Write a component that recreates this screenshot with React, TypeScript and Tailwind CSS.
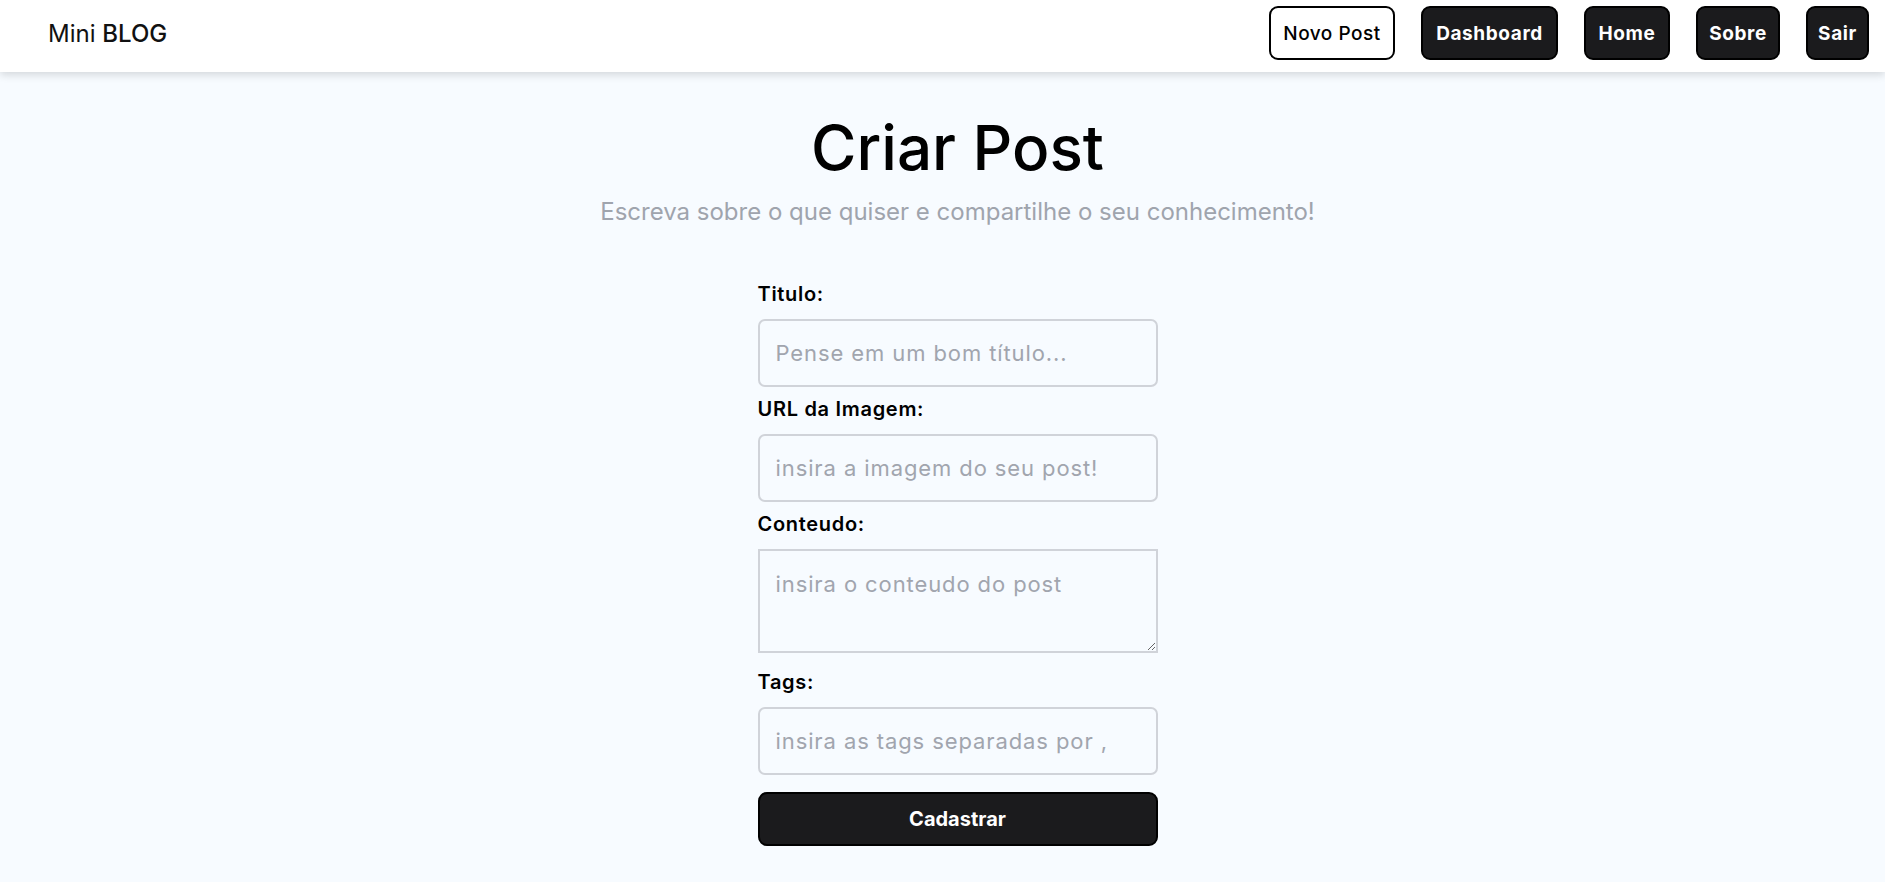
import React from "react";

const links = [
  { label: "Dashboard", w: "w-[137px]" },
  { label: "Home", w: "w-[86px]" },
  { label: "Sobre", w: "w-[84px]" },
  { label: "Sair", w: "w-[63px]" },
];

function Navbar() {
  return (
    <nav className="relative z-10 flex h-[72px] items-center justify-between bg-white pl-[48px] pr-[16px] pt-[6px] pb-[12px] shadow-[0_3px_8px_rgba(0,0,0,0.14)]">
      <a href="#" className="pt-[2px] text-[24px] leading-[54px] text-[#111]">
        Mini <span className="font-medium">BLOG</span>
      </a>
      <ul className="flex items-center gap-[26px]">
        <li>
          <a
            href="#"
            className="flex h-[54px] w-[126px] items-center justify-center rounded-[9px] border-2 border-black bg-white pt-[2px] text-[19px] font-medium tracking-[0.5px] text-black"
          >
            Novo Post
          </a>
        </li>
        {links.map((l) => (
          <li key={l.label}>
            <a
              href="#"
              className={`flex h-[54px] ${l.w} items-center justify-center rounded-[9px] border-2 border-black bg-[#1b1b1d] pt-[2px] text-[19px] font-bold tracking-[0.6px] text-white`}
            >
              {l.label}
            </a>
          </li>
        ))}
      </ul>
    </nav>
  );
}

function Field({
  label,
  placeholder,
  area,
}: {
  label: string;
  placeholder: string;
  area?: boolean;
}) {
  return (
    <label className={`flex flex-col ${area ? "mb-[17px]" : "mb-[10px]"}`}>
      <span className="mb-[13px] text-[20px] font-semibold leading-[24px] tracking-[0.7px] text-black">
        {label}
      </span>
      {area ? (
        <textarea
          placeholder={placeholder}
          className="block h-[104px] w-[400px] border-2 border-[#d0d3d9] bg-transparent px-[16px] pt-[17px] text-[22px] tracking-[0.9px] outline-none placeholder:text-[#a1a5ae]"
        />
      ) : (
        <input
          type="text"
          placeholder={placeholder}
          className="block h-[68px] w-[400px] rounded-[7px] border-2 border-[#d0d3d9] bg-transparent px-[16px] text-[22px] tracking-[0.9px] outline-none placeholder:text-[#a1a5ae]"
        />
      )}
    </label>
  );
}

export default function App() {
  return (
    <div className="min-h-screen bg-[#f7fbff] font-['Inter',sans-serif]">
      <Navbar />
      <main className="flex flex-col items-center pl-[30px]">
        <h1 className="mt-[45px] text-[62px] font-medium leading-[62px] text-black">
          Criar Post
        </h1>
        <p className="mt-[21px] text-[24px] leading-[24px] text-[#9fa4ad]">
          Escreva sobre o que quiser e compartilhe o seu conhecimento!
        </p>
        <form className="mt-[58px] flex w-[400px] flex-col">
          <Field label="Titulo:" placeholder="Pense em um bom título..." />
          <Field label="URL da Imagem:" placeholder="insira a imagem do seu post!" />
          <Field label="Conteudo:" placeholder="insira o conteudo do post" area />
          <Field label="Tags:" placeholder="insira as tags separadas por ," />
          <button
            type="button"
            className="mt-[7px] h-[54px] w-[400px] rounded-[9px] border-2 border-black bg-[#1b1b1d] text-[20px] font-bold text-white"
          >
            Cadastrar
          </button>
        </form>
      </main>
    </div>
  );
}
